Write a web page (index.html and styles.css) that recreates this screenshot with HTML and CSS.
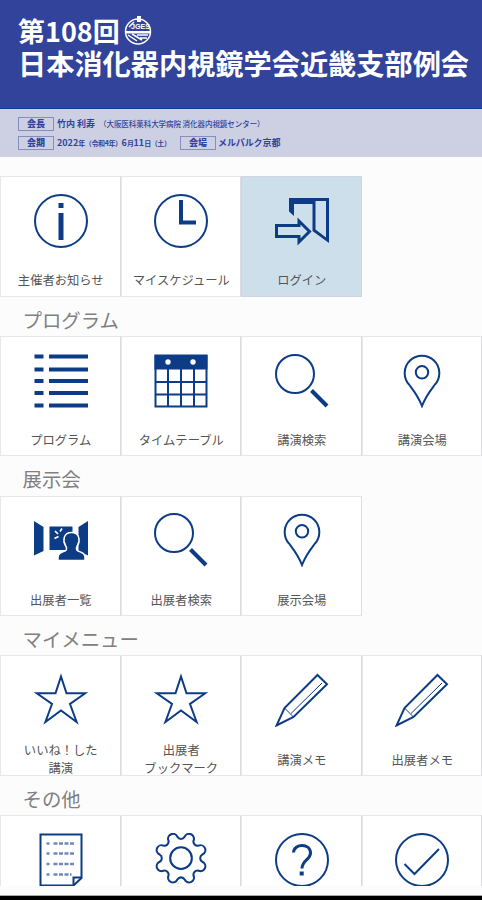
FILE: index.html
```html
<!DOCTYPE html>
<html lang="ja">
<head>
<meta charset="utf-8">
<title>第108回 日本消化器内視鏡学会近畿支部例会</title>
<link rel="stylesheet" href="styles.css">
</head>
<body>
<svg class="defs" width="0" height="0" aria-hidden="true">
  <symbol id="search" viewBox="0 0 54 54"><circle cx="20" cy="20" r="19"/><path class="thick" d="M36.5 36.5 52 52"/></symbol>
  <symbol id="pin" viewBox="0 0 54 54"><path d="M27 52C23 41.500 19 37 14 30.500A17.300 17.300 0 1 1 40 30.500C35 37 31 41.500 27 52Z"/><circle cx="27" cy="18.300" r="6.200"/></symbol>
  <symbol id="star" viewBox="0 0 54 54"><path d="M27 3.500 32.500 20.200H51.300L36 31 42.600 49 27 37.500 11.400 49 18 31 2.700 20.200H21.500Z"/></symbol>
  <symbol id="pencil" viewBox="0 0 54 54"><path d="M42.5 2 52 11.2 18.5 44 1.5 52.5 9.5 35Z"/><path class="thin" d="M9.5 35 18.5 44M16 40.5 47 10"/></symbol>
</svg>
<main class="app">
  <header class="hero">
    <div class="first-line"><span>第108回</span>
      <svg class="logo" viewBox="0 0 30 32"><circle cx="15" cy="17.5" r="12.5"/><path class="white" d="M14 2h4v6h-4zM3 17h24v2.500H3z"/><path d="M6 13l5-5M5 21l9 6M9 20l10 6M14 21h11M17 24h7"/><text x="8" y="15" textLength="19" lengthAdjust="spacingAndGlyphs">JGES</text></svg>
    </div>
    <h1>日本消化器内視鏡学会近畿支部例会</h1>
  </header>
  <section class="info">
    <p><b class="tag">会長</b><span class="name">竹内 利寿</span><span class="place">（大阪医科薬科大学病院 消化器内視鏡センター）</span></p>
    <p><b class="tag">会期</b><span class="date">2022<small>年（令和4年）</small>6<small>月</small>11<small>日（土）</small></span><b class="tag">会場</b><span class="venue">メルパルク京都</span></p>
  </section>

  <div class="menu">
    <div class="grid">
      <a class="tile"><svg class="icon" viewBox="0 0 54 54"><circle cx="27" cy="27" r="26"/><path class="fill" d="M24.5 9h5v5h-5zM24.5 19h5v27h-5z"/></svg><span>主催者お知らせ</span></a>
      <a class="tile"><svg class="icon" viewBox="0 0 54 54"><circle cx="27" cy="27" r="26"/><path class="thick" d="M27 6v22.500h15"/></svg><span>マイスケジュール</span></a>
      <a class="tile active"><svg class="icon" viewBox="0 0 54 54"><path class="fill" d="M14 4h40v45L37.500 37V10H19v12l-5-4.500ZM40.500 7v28.500L51 43.500V7Z" fill-rule="evenodd"/><path class="arrow" d="M1.500 31.500H24V27L34.500 37.500 24 48v-5.500H1.500Z"/></svg><span>ログイン</span></a>
    </div>
    <h2>プログラム</h2>
    <div class="grid">
      <a class="tile"><svg class="icon" viewBox="0 0 54 54"><path class="fill" d="M.5.500h9v4h-9zM15 .500h39v4H15zM.5 13.500h9v4h-9zM15 13.500h39v4H15zM.5 25h9v4h-9zM15 25h39v4H15zM.5 37h9v4h-9zM15 37h39v4H15zM.5 49.500h9v4h-9zM15 49.500h39v4H15z"/></svg><span>プログラム</span></a>
      <a class="tile"><svg class="icon" viewBox="0 0 54 54"><path class="fill" d="M.5.500h53v15H.5z"/><path d="M1.500 1v51.500h51V1M14 15v37M27 15v37M40 15v37M1 28h52M1 40.500h52"/><circle class="white" cx="14" cy="8" r="2.700"/><circle class="white" cx="39" cy="8" r="2.700"/></svg><span>タイムテーブル</span></a>
      <a class="tile"><svg class="icon"><use href="#search"/></svg><span>講演検索</span></a>
      <a class="tile"><svg class="icon"><use href="#pin"/></svg><span>講演会場</span></a>
    </div>
    <h2>展示会</h2>
    <div class="grid">
      <a class="tile"><svg class="icon" viewBox="0 0 54 54"><path class="fill" d="M0 8 9.500 14v24L0 42.500ZM54 8 44.500 14v24L54 42.500ZM15.500 13.500h23V37h-23z"/><path class="person" d="M24 47.500v-3c0-4 3-5 7-6.500 2-1 2-3 .5-5.500-3-5-2-13 6-13s9 8 6 13c-1.500 2.500-1.500 4.500.5 5.500 4 1.500 7 2.500 7 6.500v3Z"/><path class="spark" d="m21 18 3 3M28 15.500l-2 3M20.500 25.500l4-2"/></svg><span>出展者一覧</span></a>
      <a class="tile"><svg class="icon"><use href="#search"/></svg><span>出展者検索</span></a>
      <a class="tile"><svg class="icon"><use href="#pin"/></svg><span>展示会場</span></a>
    </div>
    <h2>マイメニュー</h2>
    <div class="grid">
      <a class="tile double"><svg class="icon"><use href="#star"/></svg><span>いいね！した<br>講演</span></a>
      <a class="tile double"><svg class="icon"><use href="#star"/></svg><span>出展者<br>ブックマーク</span></a>
      <a class="tile"><svg class="icon"><use href="#pencil"/></svg><span>講演メモ</span></a>
      <a class="tile"><svg class="icon"><use href="#pencil"/></svg><span>出展者メモ</span></a>
    </div>
    <h2>その他</h2>
    <div class="grid">
      <a class="tile"><svg class="icon" viewBox="0 0 54 54"><path d="M6.500 1.500h41V45l-8 7.500h-33Z"/><path d="M39.500 52v-7.500h7.500"/><path class="dots" d="M12.500 10.500h3M19.500 10.500h22M12.500 20.500h3M19.500 20.500h22M12.500 31h3M19.500 31h22M12.500 41.500h3M19.500 41.500h18"/></svg></a>
      <a class="tile"><svg class="icon" viewBox="0 0 54 54"><g transform="translate(-.8 -.6) scale(1.030)"><circle cx="27" cy="25" r="10.500"/><path d="M30.500 4.300A4.700 4.700 0 0 1 39.200 7.900A4 4 0 0 0 44.100 12.800A4.700 4.700 0 0 1 47.700 21.500A4 4 0 0 0 47.700 28.500A4.700 4.700 0 0 1 44.100 37.200A4 4 0 0 0 39.200 42.100A4.700 4.700 0 0 1 30.500 45.700A4 4 0 0 0 23.500 45.700A4.700 4.700 0 0 1 14.800 42.100A4 4 0 0 0 9.900 37.200A4.700 4.700 0 0 1 6.300 28.500A4 4 0 0 0 6.300 21.500A4.700 4.700 0 0 1 9.900 12.800A4 4 0 0 0 14.800 7.900A4.700 4.700 0 0 1 23.500 4.300A4 4 0 0 0 30.500 4.300Z"/></g></svg></a>
      <a class="tile"><svg class="icon" viewBox="0 0 54 54"><circle cx="27" cy="27" r="26"/><path class="question" d="M18.500 19.500C19 10 35.500 10 35.500 20c0 7-8.500 7-8.500 15.500"/><path class="fill" d="M24.700 38.500h4v4h-4z"/></svg></a>
      <a class="tile"><svg class="icon" viewBox="0 0 54 54"><circle cx="27" cy="27" r="26"/><path d="M9.500 31 19.500 41 44 16"/></svg></a>
    </div>
  </div>
  <footer class="bottom"></footer>
</main>
</body>
</html>
```
FILE: styles.css
```css
* { box-sizing: border-box; }
body {
  margin: 0;
  background: #fcfcfd;
  font-family: "Noto Sans CJK JP", sans-serif;
}
.defs { display: block; height: 0; }
.app {
  display: flex;
  flex-direction: column;
  height: 900px;
  overflow: hidden;
}
.hero {
  flex: none;
  height: 109px;
  padding: 13px 0 0 18px;
  background: #31439b;
  border-bottom: 1px solid #123a8e;
  color: #fff;
}
.first-line {
  display: flex;
  height: 33px;
  font-size: 27px;
  font-weight: 700;
  line-height: 35px;
}
.logo { flex: none; width: 30px; height: 32px; margin: 1px 0 0 3px; fill: none; stroke: #fff; stroke-width: 1.500; }
.logo .white { fill: #fff; stroke: none; }
.logo text { fill: #fff; stroke: none; font: 700 8px "Liberation Sans", sans-serif; }
h1 {
  margin: 0;
  font-size: 28.200px;
  font-weight: 700;
  line-height: 33px;
  white-space: nowrap;
}
.info {
  flex: none;
  display: flex;
  flex-direction: column;
  gap: 5px;
  height: 48px;
  padding: 8px 0 0 18px;
  background: #cdcfe2;
  color: #31439b;
  font-size: 9px;
  font-weight: 700;
}
.info p { display: flex; align-items: center; height: 14px; margin: 0; white-space: nowrap; line-height: 14px; }
.tag {
  width: 36px;
  height: 14px;
  border: 1px solid #858fbd;
  text-align: center;
  line-height: 12px;
}
.name { width: 42px; margin-left: 3px; }
.place { font-size: 7.500px; font-weight: 500; letter-spacing: -.05px; }
.date { width: 123px; margin-left: 3px; }
.date small { font-size: 7px; letter-spacing: -.4px; }
.venue { margin-left: 2px; letter-spacing: -.1px; }
.menu { flex: none; height: 729px; padding-top: 19.200px; overflow: hidden; }
.grid { display: grid; grid-template-columns: repeat(4, 120.500px); height: 120.500px; }
.tile {
  display: flex;
  flex-direction: column;
  align-items: center;
  height: 120.500px;
  padding: 16.600px 0 0 1px;
  background: #fff;
  border: 1px solid #e8e8ea;
  border-right-color: #dcdcde;
  color: #555;
  font-size: 12.300px;
  line-height: 18px;
  text-align: center;
}
.tile span { margin-top: 23.700px; white-space: nowrap; }
.tile.double span { margin-top: 13.700px; }
.tile.active { background: #cddfeb; border-color: #d0d6df; }
h2 {
  height: 39.250px;
  margin: 0;
  padding-left: 22.500px;
  color: #808080;
  font-size: 19.400px;
  font-weight: 400;
  line-height: 45px;
}
.icon { flex: none; width: 54px; height: 54px; fill: none; stroke: #0c3c86; stroke-width: 2; }
.fill { fill: #0c3c86; stroke: none; }
.white { fill: #fff; stroke: none; }
.thick { stroke-width: 4; }
.thin { stroke-width: 1; }
.arrow { fill: #cddfeb; stroke-width: 3; }
.person { fill: #0c3c86; stroke: #fff; stroke-width: 1.500; }
.spark { stroke: #fff; stroke-width: 1.700; }
.dots { stroke-width: 2.500; stroke-dasharray: 4 1.500; opacity: .6; }
.question { stroke-width: 3; }
.bottom { flex: none; height: 14px; border-bottom: 4px solid #000; box-shadow: inset 0 -1px #aaa; }
```
